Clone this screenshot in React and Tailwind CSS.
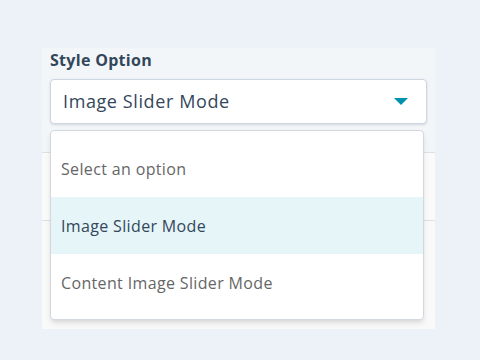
import React from "react";

const options = ["Select an option", "Image Slider Mode", "Content Image Slider Mode"];

function App() {
  const selected = "Image Slider Mode";

  return (
    <div className="w-[480px] h-[360px] bg-[#edf1f8] pt-[48px] pl-[42px] font-['Open_Sans',sans-serif]">
      <div className="relative w-[393px] h-[281px] bg-[#f9f9fa]">
        <div className="bg-[#f3f6f9] px-[8px] pt-[1px] h-[105px] border-b border-[#dde1e6]">
          <div className="text-[16px] leading-[22px] font-bold tracking-[0.3px] text-[#33475b]">
            Style Option
          </div>
          <div className="mt-[8px] h-[45px] flex items-center justify-between bg-white border border-[#cbd6e2] rounded-[4px] shadow-sm pl-[12px] pr-[18px]">
            <span className="text-[18px] tracking-[0.6px] text-[#33475b]">{selected}</span>
            <svg width="14" height="7" viewBox="0 0 14 7">
              <path d="M0 0 H14 L7 7 Z" fill="#0091ae" />
            </svg>
          </div>
        </div>
        <div className="h-[68px] border-b border-[#dde1e6] bg-[#fafafa]" />

        <div className="absolute left-[8px] top-[82px] w-[374px] h-[190px] bg-white border border-[#d3d8de] rounded-[4px] shadow-md py-[9px]">
          {options.map((opt) => (
            <div
              key={opt}
              className={
                "h-[57px] flex items-center px-[10px] text-[16px] tracking-[0.35px] " +
                (opt === selected ? "bg-[#e5f5f8] text-[#33475b]" : "text-[#666666]")
              }
            >
              {opt}
            </div>
          ))}
        </div>
      </div>
    </div>
  );
}

export default App;
